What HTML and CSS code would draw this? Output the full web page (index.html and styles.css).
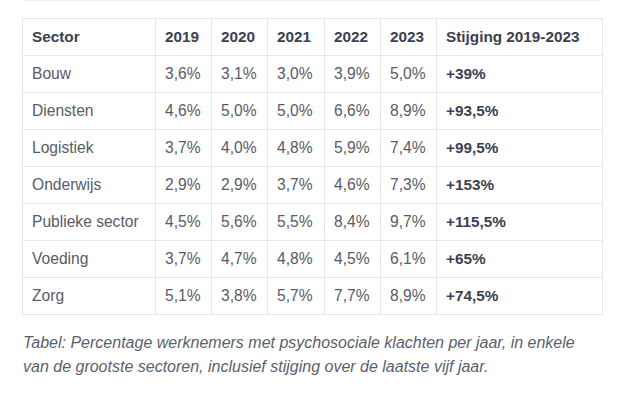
FILE: index.html
```html
<!DOCTYPE html>
<html lang="nl">
<head>
<meta charset="utf-8">
<link rel="stylesheet" href="styles.css">
</head>
<body>
<div class="page">
  <div class="topline"></div>
  <figure class="fig">
    <table class="data">
      <colgroup>
        <col class="c-sector"><col class="c-y"><col class="c-y"><col class="c-y3"><col class="c-y"><col class="c-y"><col class="c-st">
      </colgroup>
      <thead>
        <tr><th>Sector</th><th>2019</th><th>2020</th><th>2021</th><th>2022</th><th>2023</th><th>Stijging 2019-2023</th></tr>
      </thead>
      <tbody>
        <tr><td>Bouw</td><td>3,6%</td><td>3,1%</td><td>3,0%</td><td>3,9%</td><td>5,0%</td><td class="b">+39%</td></tr>
        <tr><td>Diensten</td><td>4,6%</td><td>5,0%</td><td>5,0%</td><td>6,6%</td><td>8,9%</td><td class="b">+93,5%</td></tr>
        <tr><td>Logistiek</td><td>3,7%</td><td>4,0%</td><td>4,8%</td><td>5,9%</td><td>7,4%</td><td class="b">+99,5%</td></tr>
        <tr><td>Onderwijs</td><td>2,9%</td><td>2,9%</td><td>3,7%</td><td>4,6%</td><td>7,3%</td><td class="b">+153%</td></tr>
        <tr><td>Publieke sector</td><td>4,5%</td><td>5,6%</td><td>5,5%</td><td>8,4%</td><td>9,7%</td><td class="b">+115,5%</td></tr>
        <tr><td>Voeding</td><td>3,7%</td><td>4,7%</td><td>4,8%</td><td>4,5%</td><td>6,1%</td><td class="b">+65%</td></tr>
        <tr><td>Zorg</td><td>5,1%</td><td>3,8%</td><td>5,7%</td><td>7,7%</td><td>8,9%</td><td class="b">+74,5%</td></tr>
      </tbody>
    </table>
    <figcaption class="caption">Tabel: Percentage werknemers met psychosociale klachten per jaar, in enkele van de grootste sectoren, inclusief stijging over de laatste vijf jaar.</figcaption>
  </figure>
</div>
</body>
</html>
```
FILE: styles.css
```css
html, body {
  margin: 0;
  padding: 0;
  background: #ffffff;
}
.page {
  width: 622px;
  height: 418px;
  font-family: "Liberation Sans", Arial, sans-serif;
}
.topline {
  margin-left: 23px;
  width: 577px;
  height: 1px;
  background: #f0f0f0;
}
.fig {
  margin: 17px 0 0 22px;
  width: 580px;
}
.data {
  border-collapse: collapse;
  table-layout: fixed;
  width: 580px;
  font-size: 15.6px;
  line-height: 18px;
}
.c-sector { width: 133px; }
.c-y { width: 56px; }
.c-y3 { width: 57px; }
.c-st { width: 166px; }
.data th,
.data td {
  border: 1px solid #e6e6e6;
  padding: 9px 9px 9px 9px;
  height: 18px;
  text-align: left;
  white-space: nowrap;
}
.data th {
  font-weight: bold;
  font-size: 15.3px;
  color: #3b4150;
}
.data td {
  color: #585c63;
}
.data td.b {
  font-weight: bold;
  font-size: 15.3px;
  color: #3b4150;
}
.caption {
  margin: 16px 0 0 1px;
  font-size: 16px;
  line-height: 24px;
  font-style: italic;
  color: #5a5f69;
  width: 560px;
}
```
